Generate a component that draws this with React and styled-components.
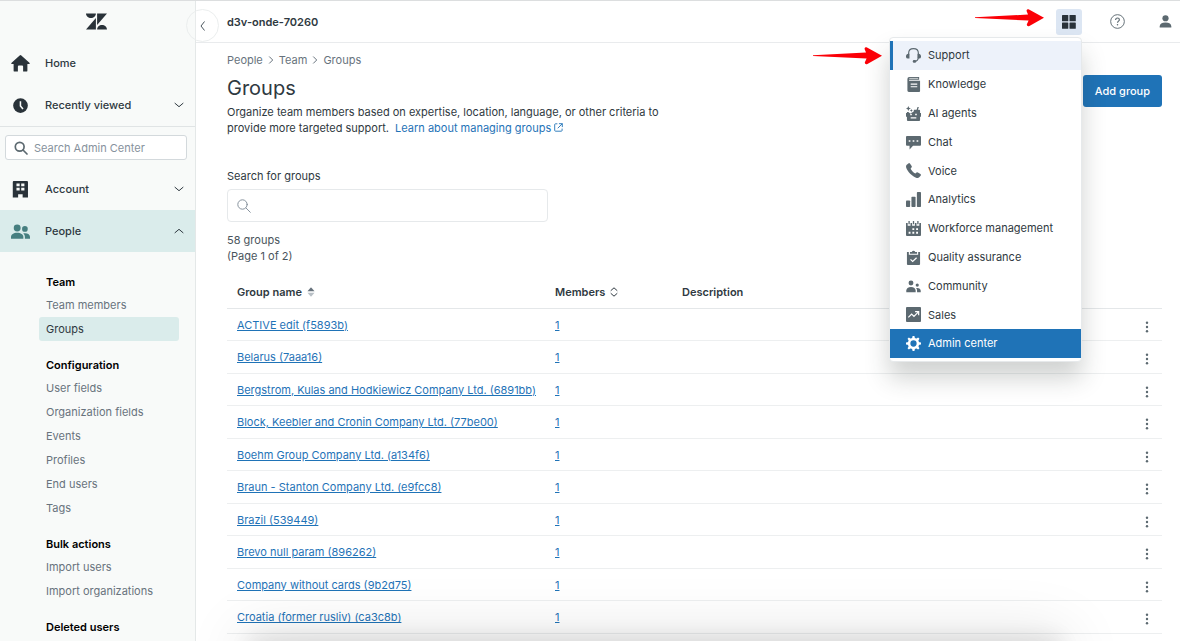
import React from 'react'
import styled, { createGlobalStyle } from 'styled-components'

const GlobalStyle = createGlobalStyle`
*{
    box-sizing:border-box;
}

body{
    margin:0;
    overflow:hidden;
    background-color:white;
    color:#2f3941;
    font-family:Inter, "Liberation Sans", sans-serif;
    font-size:11px;
    line-height:16px;
}

button, input{
    font:inherit;
    color:inherit;
}

h1, h2, p, ul, ol{
    margin:0;
    padding:0;
    font-size:inherit;
    list-style:none;
}

a{
    color:inherit;
    text-decoration:none;
}

svg{
    display:block;
    flex:none;
}
`

const Page = styled.div`
display:flex;
height:100vh;
border-top:1px solid #dcdedf;
overflow:hidden;
`

const Sidebar = styled.aside`
position:relative;
flex:none;
width:196px;
border-right:1px solid #e4e8e8;
background-color:#f8faf9;
`

const LogoLink = styled.a`
display:flex;
justify-content:center;
padding:12px 3px 12px 0;
color:#293239;
`

const NavButton = styled.button`
display:flex;
align-items:center;
width:100%;
height:42px;
padding:0 11px;
border:0;
background-color:${props => props.$active ? '#daeceb' : 'transparent'};
font-weight:500;
text-align:left;

svg:first-child{
    margin-right:15px;
    color:${props => props.$active ? '#467f80' : '#293239'};
}

span{
    flex:1;
}
`

const NavDivider = styled.hr`
margin:0;
border:0;
border-top:1px solid #e0e4e5;
`

const SidebarSearch = styled.label`
display:flex;
align-items:center;
gap:6px;
height:25px;
margin:8px 8px 8px 5px;
padding:0 8px;
border:1px solid #d3d9dc;
border-radius:3px;
background-color:white;
color:#5c6970;

input{
    flex:1;
    min-width:0;
    padding:0;
    border:0;
    outline:0;
    background:none;
}

input::placeholder{
    color:#87929d;
    opacity:1;
}
`

const SubNav = styled.nav`
padding:19px 16px 0 39px;
`

const SubNavGroup = styled.section`
margin-bottom:13px;
`

const SubNavTitle = styled.h2`
padding-left:7px;
color:#000;
font-weight:600;
line-height:22px;
`

const SubNavLink = styled.a`
display:block;
padding-left:7px;
border-radius:3px;
line-height:24px;
color:${props => props.$active ? '#2f3941' : '#68737d'};
background-color:${props => props.$active ? '#daeceb' : 'transparent'};
`

const CollapseButton = styled.button`
position:absolute;
top:8px;
right:-24px;
z-index:1;
display:flex;
align-items:center;
justify-content:center;
width:33px;
height:33px;
padding:0;
border:1px solid #ebeeee;
border-radius:50%;
background:linear-gradient(90deg, #f8faf9 0 8px, #e8ebeb 8px 9px, white 9px);
color:#4a555d;
`

const Content = styled.div`
flex:1;
min-width:0;
display:flex;
flex-direction:column;
`

const TopBar = styled.header`
display:flex;
align-items:center;
gap:22px;
flex:none;
height:42px;
padding:0 2px 0 31px;
border-bottom:1px solid #e9ebed;

strong{
    flex:1;
    font-weight:600;
}
`

const BarButton = styled.button`
display:flex;
align-items:center;
justify-content:center;
width:26px;
height:26px;
padding:0;
border:0;
border-radius:3px;
background-color:${props => props.$open ? '#dce6f3' : 'transparent'};
color:${props => props.$open ? '#293239' : '#5c6970'};
`

const Tray = styled.div`
position:relative;
`

const TrayMenu = styled.ul`
position:absolute;
top:28px;
right:0;
z-index:2;
width:193px;
padding:3px 0;
border:1px solid #e6e9eb;
border-radius:4px;
background-color:white;
box-shadow:0 16px 24px 0 rgba(40, 50, 45, 0.22);
`

const TrayItem = styled.li`
height:29px;

&:nth-child(5n){
    height:28px;
}
`

const TrayLink = styled.a`
display:flex;
align-items:center;
gap:7px;
height:100%;
padding-left:16px;
background-color:${props => props.$current ? '#1f73b7' : props.$focused ? '#edf2fa' : 'transparent'};
box-shadow:${props => props.$focused ? 'inset 3px 0 #1f73b7' : 'none'};
color:${props => props.$current ? 'white' : '#2f3941'};

svg{
    color:${props => props.$current ? 'white' : '#5c6970'};
}
`

const Arrow = styled.svg`
position:absolute;
top:${props => props.$top};
right:${props => props.$right};
z-index:3;
pointer-events:none;
`

const Main = styled.main`
flex:1;
padding:9px 18px 0 31px;
`

const Breadcrumb = styled.ol`
display:flex;
align-items:center;
color:#68737d;

li{
    display:flex;
    align-items:center;
}

svg{
    margin:0 5px;
}
`

const PageHead = styled.div`
display:flex;
align-items:flex-start;
justify-content:space-between;
margin-top:7px;

h1{
    font-size:20px;
    font-weight:400;
    line-height:26px;
}

p{
    max-width:440px;
    margin-top:3px;
}
`

const HelpLink = styled.a`
margin-left:3px;
color:#1f73b7;

svg{
    display:inline;
    margin-left:3px;
}
`

const PrimaryButton = styled.button`
height:32px;
padding:0 12px;
border:0;
border-radius:3px;
background-color:#1f73b7;
color:white;
font-weight:500;
white-space:nowrap;
`

const SearchField = styled.div`
margin-top:32px;

label{
    display:block;
}
`

const SearchBox = styled.div`
display:flex;
align-items:center;
gap:8px;
width:321px;
max-width:100%;
height:33px;
margin-top:5px;
padding:0 9px;
border:1px solid #e6e9eb;
border-radius:4px;
color:#87929d;

input{
    flex:1;
    border:0;
    outline:0;
    background:none;
}
`

const Count = styled.p`
&&{
    margin-top:10px;
}
color:#49545c;
`

const GroupTable = styled.table`
width:100%;
margin-top:13px;
border-collapse:separate;
border-spacing:0;
table-layout:fixed;

th, td{
    height:32px;
    padding:0 10px;
    border-bottom:1px solid #edeff0;
    text-align:left;
    white-space:nowrap;
}

th{
    padding-bottom:2px;
    border-bottom-color:#e4e7e9;
    font-weight:600;
}

th:nth-child(1){
    width:318px;
}

th:nth-child(2){
    width:127px;
}

th:nth-child(4){
    width:40px;
}

tbody tr:nth-child(even) td{
    height:33px;
}

td:last-child{
    padding:0 5px;
}

td a{
    color:#1f73b7;
    text-decoration:underline;
}
`

const SortButton = styled.button`
display:flex;
align-items:center;
gap:5px;
padding:0;
border:0;
background:none;
`

const RowMenuButton = styled.button`
display:flex;
align-items:center;
justify-content:center;
width:20px;
height:20px;
margin:4px 0 0 auto;
padding:0;
border:0;
background:none;
color:#5c6970;
`

const FoldShadow = styled.div`
position:fixed;
top:100%;
left:252px;
right:122px;
height:40px;
box-shadow:0 0 24px 4px rgba(0, 0, 0, 0.1), 0 0 60px 10px rgba(0, 0, 0, 0.1);
pointer-events:none;
`

const stroke = { fill: 'none', stroke: 'currentColor', strokeLinecap: 'round', strokeLinejoin: 'round' }

function Icon({ size = 15, children }) {
  return (
    <svg width={size} height={size} viewBox='0 0 16 16' fill='currentColor' aria-hidden='true'>
      {children}
    </svg>
  )
}

function Chevron({ up }) {
  return (
    <svg width='10' height='6' viewBox='0 0 10 6' {...stroke} aria-hidden='true'>
      <path d={up ? 'M1 4.7l4-3.4 4 3.4' : 'M1 1.3l4 3.4 4-3.4'} />
    </svg>
  )
}

const PeopleShape = () => (
  <>
    <circle cx='5.2' cy='5' r='2.9' />
    <path d='M0 14v-1.4C0 10.500 2.200 9 5.200 9s5.200 1.500 5.200 3.600V14z' />
    <circle cx='11.700' cy='5.800' r='2.400' />
    <path d='M11.700 14H16v-1.300c0-2-1.600-3.300-4.200-3.300-.6 0-1.100.1-1.500.2 1 .8 1.400 1.800 1.400 3z' />
  </>
)

const apps = [
  { name: 'Support', focused: true, icon: <>
    <path d='M2.800 7V5.700C2.800 2.700 5 .7 8 .7s5.200 2 5.200 5v3.600c0 3-1.500 4.800-4 5' fill='none' stroke='currentColor' strokeWidth='1.200' />
    <path d='M3.700 6v5.200H2.500A2.300 2.300 0 010 8.700C0 7.200 1.100 6.200 2.500 6zM12.300 6v5.200h1.200A2.300 2.300 0 0016 8.700c0-1.500-1.100-2.500-2.500-2.700z' />
    <rect x='7.200' y='12.900' width='3.600' height='2.800' rx='1.400' />
  </> },
  { name: 'Knowledge', icon: <>
    <path fillRule='evenodd' d='M3.500 0H14v3H3.500a.6.6 0 000 1H15v11a1 1 0 01-1 1H3a1.500 1.500 0 01-1.500-1.500V2a2 2 0 012-2zM5 7v1.200h7V7zm0 2.800V11h7V9.800z' />
    <path d='M3.500 1.500H13' stroke='white' strokeWidth='.7' />
  </> },
  { name: 'AI agents', icon: <>
    <path d='M2.500 0l.8 1.900 1.900.8-1.900.8-.8 1.900-.8-1.900L0 2.700l1.700-.8zM5.700 3.200l.5 1.100 1.100.5-1.100.5-.5 1.100-.5-1.100-1.100-.5 1.100-.5z' />
    <path fillRule='evenodd' d='M8.500 4h2.800l1-3h1.400l-1 3H14a1 1 0 011 1v2.500h1v4h-1V15a1 1 0 01-1 1H2a1 1 0 01-1-1v-3.500H0v-4h1V6.300l1.500.2 2 1.500L8 6zM4.500 8.300v1.600h1.700V8.300zm5.300 0v1.600h1.700V8.300zM5 12v1.300h6V12z' />
  </> },
  { name: 'Chat', icon: <path fillRule='evenodd' d='M1 1h14a1 1 0 011 1v8.500a1 1 0 01-1 1H7.500L3.800 15.500v-4H1a1 1 0 01-1-1V2a1 1 0 011-1zm1.900 4.500v1.800h1.800V5.500zm4.200 0v1.800h1.800V5.500zm4.200 0v1.800h1.800V5.500z' /> },
  { name: 'Voice', icon: <path d='M.8 1.900L2.500.4a1.200 1.200 0 011.700.2l1.800 2.700a1.200 1.200 0 01-.2 1.500L4.900 6c.9 1.900 3.100 4.100 5.100 5.100l1.200-.9a1.200 1.200 0 011.500-.2l2.700 1.800a1.200 1.200 0 01.2 1.700l-1.500 1.700c-.7.7-1.700 1-2.700.7C6.700 14.600 1.400 9.300.1 4.600c-.2-1 0-2 .7-2.700z' /> },
  { name: 'Analytics', icon: <>
    <rect x='0' y='9' width='4.400' height='7' rx='.8' />
    <rect x='5.800' y='5' width='4.400' height='11' rx='.8' />
    <rect x='11.600' y='0' width='4.400' height='16' rx='.8' />
  </> },
  { name: 'Workforce management', icon: <>
    <path fillRule='evenodd' d='M0 2h1.800v3h3V2h1.700v3h3V2h1.700v3h3V2H16v13a1 1 0 01-1 1H1a1 1 0 01-1-1zM6.800 7.700v2h2v-2zm4 0v2h2v-2zm-8 3.800v2h2v-2zm4 0v2h2v-2zm4 0v2h2v-2z' />
    <path d='M3.300 0v3.500M8 0v3.500M12.700 0v3.500' stroke='currentColor' strokeWidth='1.400' />
  </> },
  { name: 'Quality assurance', icon: <>
    <path d='M1 2h2v3h10V2h2v13a1 1 0 01-1 1H2a1 1 0 01-1-1z' />
    <path d='M4.200 4V2h2a1.900 1.900 0 013.600 0h2v2z' />
    <path d='M4.800 10l2.300 2.200 4.200-4' fill='none' stroke='white' strokeWidth='1.300' />
  </> },
  { name: 'Community', icon: <>
    <circle cx='5.300' cy='4.300' r='2.600' />
    <path d='M.3 14v-1.800c0-2 2-3.700 5-3.700s5 1.700 5 3.700V14z' />
    <circle cx='12' cy='6.500' r='1.700' />
    <path d='M11.800 14h3.900v-1.500c0-1.800-1.500-3-3.700-3-.5 0-.9.100-1.300.2.800.8 1.100 1.700 1.100 2.700z' />
  </> },
  { name: 'Sales', icon: <>
    <rect width='16' height='16' rx='1' />
    <path d='M2.500 11l3.500-3.500 2.500 2.500 4.500-4.500M9.700 5h3.800v3.800' fill='none' stroke='white' strokeWidth='1.300' />
  </> },
  { name: 'Admin center', current: true, icon: <>
    <circle cx='8' cy='8' r='4.700' fill='none' stroke='currentColor' strokeWidth='2.700' />
    {[0, 45, 90, 135, 180, 225, 270, 315].map(angle => (
      <path key={angle} d='M6.400 3L7 0h2l.6 3z' transform={`rotate(${angle} 8 8)`} />
    ))}
  </> },
]

const subNav = [
  { title: 'Team', links: ['Team members', 'Groups'] },
  { title: 'Configuration', links: ['User fields', 'Organization fields', 'Events', 'Profiles', 'End users', 'Tags'] },
  { title: 'Bulk actions', links: ['Import users', 'Import organizations'] },
  { title: 'Deleted users', links: [] },
]

const groups = [
  'ACTIVE edit (f5893b)',
  'Belarus (7aaa16)',
  'Bergstrom, Kulas and Hodkiewicz Company Ltd. (6891bb)',
  'Block, Keebler and Cronin Company Ltd. (77be00)',
  'Boehm Group Company Ltd. (a134f6)',
  'Braun - Stanton Company Ltd. (e9fcc8)',
  'Brazil (539449)',
  'Brevo null param (896262)',
  'Company without cards (9b2d75)',
  'Croatia (former rusliv) (ca3c8b)',
]

function RedArrow({ top, right }) {
  return (
    <Arrow $top={top} $right={right} width='69' height='18' viewBox='0 0 69 18' aria-hidden='true'>
      <path d='M0 8.200L53 5.600l-1.200-3C51 1 52.600-.3 54 .6L69 8.800 54.400 17c-1.600.8-3.200-.5-2.400-2L53.600 11.500 0 9z' fill='#fb0007' />
    </Arrow>
  )
}

function SideNav() {
  return (
    <Sidebar>
      <LogoLink href='#' aria-label='Zendesk'>
        <svg width='21' height='17' viewBox='0 0 21 17' fill='currentColor' aria-hidden='true'>
          <path d='M0 .5h9.900c0 2.700-2.200 4.500-4.900 4.500S0 3.200 0 .5zM9.900 5v11.500H0zM11.100.5H21L11.100 12zM11.100 16.500c0-2.700 2.200-4.600 4.900-4.600s5 1.900 5 4.600z' />
        </svg>
      </LogoLink>
      <NavButton>
        <Icon size={19}><path d='M7.300 1.200a1 1 0 011.400 0l6.800 6.100c.5.500.3 1.100-.4 1.100h-1.300V14c0 .5-.3.800-.8.800h-2.800V10.500c0-.5-.3-.8-.8-.8H6.600c-.5 0-.8.300-.8.800v4.300H3c-.5 0-.8-.3-.8-.8V8.400H.9c-.7 0-.9-.6-.4-1.100z' /></Icon>
        <span>Home</span>
      </NavButton>
      <NavButton>
        <Icon size={19}><path fillRule='evenodd' d='M8 1.900a6.200 6.200 0 100 12.400A6.200 6.200 0 008 1.900zM7.300 4.500h1.300v3.700l2 2.300-1 .9-2.300-2.700z' /></Icon>
        <span>Recently viewed</span>
        <Chevron />
      </NavButton>
      <NavDivider />
      <SidebarSearch>
        <svg width='14' height='14' viewBox='0 0 14 14' {...stroke} strokeWidth='1.700' aria-hidden='true'>
          <circle cx='5.700' cy='5.700' r='4.400' /><path d='M9 9l4 4' />
        </svg>
        <input type='search' placeholder='Search Admin Center' aria-label='Search Admin Center' />
      </SidebarSearch>
      <NavButton>
        <Icon size={19}><path fillRule='evenodd' d='M2.500.8h10.800c.6 0 1 .4 1 1v13H9.800v-2.700H6v2.700H1.500v-13c0-.6.400-1 1-1zM4.600 3v2.300h2.700V3zm4 0v2.300h2.700V3zm-4 3.600v2.300h2.700V6.600zm4 0v2.300h2.700V6.600z' /></Icon>
        <span>Account</span>
        <Chevron />
      </NavButton>
      <NavButton $active aria-expanded='true'>
        <Icon size={19}><PeopleShape /></Icon>
        <span>People</span>
        <Chevron up />
      </NavButton>
      <SubNav>
        {subNav.map(group => (
          <SubNavGroup key={group.title}>
            <SubNavTitle>{group.title}</SubNavTitle>
            {group.links.map(link => (
              <SubNavLink key={link} href='#' $active={link === 'Groups'}>{link}</SubNavLink>
            ))}
          </SubNavGroup>
        ))}
      </SubNav>
      <CollapseButton aria-label='Collapse navigation'>
        <svg width='5' height='10' viewBox='0 0 5 10' {...stroke} aria-hidden='true'><path d='M4.300.8L1 5l3.300 4.200' /></svg>
      </CollapseButton>
    </Sidebar>
  )
}

function Header() {
  return (
    <TopBar>
      <strong>d3v-onde-70260</strong>
      <Tray>
        <BarButton $open aria-label='Zendesk products' aria-expanded='true'>
          <svg width='14' height='14' viewBox='0 0 14 14' fill='currentColor' aria-hidden='true'>
            <rect x='0' y='0' width='6.300' height='6.300' rx='.6' />
            <rect x='7.500' y='0' width='6.300' height='6.300' rx='.6' />
            <rect x='0' y='7.500' width='6.300' height='6.300' rx='.6' />
            <rect x='7.500' y='7.500' width='6.300' height='6.300' rx='.6' />
          </svg>
        </BarButton>
        <TrayMenu>
          {apps.map(app => (
            <TrayItem key={app.name}>
              <TrayLink href='#' $current={app.current} $focused={app.focused}>
                <Icon>{app.icon}</Icon>
                {app.name}
              </TrayLink>
            </TrayItem>
          ))}
        </TrayMenu>
        <RedArrow top='0px' right='38px' />
        <RedArrow top='38px' right='200px' />
      </Tray>
      <BarButton aria-label='Help'>
        <Icon>
          <circle cx='8' cy='8' r='7.300' fill='none' stroke='currentColor' />
          <path d='M6 6.300C6 5 6.800 4.200 8 4.200s2 .8 2 1.900C10 7.500 8 7.700 8 9.300' fill='none' stroke='currentColor' strokeWidth='1.200' />
          <circle cx='8' cy='11.500' r='.8' />
        </Icon>
      </BarButton>
      <BarButton aria-label='Profile'>
        <Icon>
          <circle cx='8' cy='4.500' r='3.300' />
          <path d='M1.800 14.500v-1.300C1.800 10.500 4 9 8 9s6.200 1.500 6.200 4.200v1.300z' />
        </Icon>
      </BarButton>
    </TopBar>
  )
}

function Crumb({ children, last }) {
  return (
    <li>
      {last ? <span aria-current='page'>{children}</span> : <a href='#'>{children}</a>}
      {!last && <svg width='6' height='8' viewBox='0 0 6 8' {...stroke} aria-hidden='true'><path d='M1.500.8L4.700 4 1.500 7.200' /></svg>}
    </li>
  )
}

function App() {
  return (
    <>
      <GlobalStyle />
      <Page>
        <SideNav />
        <Content>
          <Header />
          <Main>
            <Breadcrumb>
              <Crumb>People</Crumb>
              <Crumb>Team</Crumb>
              <Crumb last>Groups</Crumb>
            </Breadcrumb>
            <PageHead>
              <div>
                <h1>Groups</h1>
                <p>
                  Organize team members based on expertise, location, language, or other criteria to provide more targeted support.{' '}
                  <HelpLink href='#'>
                    Learn about managing groups
                    <svg width='9' height='9' viewBox='0 0 9 9' {...stroke} strokeWidth='.9' aria-hidden='true'>
                      <path d='M3 .8H1.500a.8.8 0 00-.8.800v5.800c0 .5.300.8.800.8h5.800c.5 0 .8-.3.800-.8V6M5.300.7h3v3M8.100.9L4 5' />
                    </svg>
                  </HelpLink>
                </p>
              </div>
              <PrimaryButton>Add group</PrimaryButton>
            </PageHead>
            <SearchField>
              <label htmlFor='group-search'>Search for groups</label>
              <SearchBox>
                <svg width='14' height='14' viewBox='0 0 14 14' {...stroke} aria-hidden='true'>
                  <circle cx='5.500' cy='5.500' r='4.700' /><path d='M9 9l4.300 4.300' />
                </svg>
                <input id='group-search' type='search' />
              </SearchBox>
            </SearchField>
            <Count>58 groups<br />(Page 1 of 2)</Count>
            <GroupTable>
              <thead>
                <tr>
                  <th>
                    <SortButton>
                      Group name
                      <svg width='8' height='10' viewBox='0 0 8 10' aria-hidden='true'>
                        <path d='M.5 4.200h7L4.500.8a.7.7 0 00-1 0z' fill='#68737d' />
                        <path d='M.5 5.800h7l-3 3.400a.7.7 0 01-1 0z' fill='#b9c0c6' />
                      </svg>
                    </SortButton>
                  </th>
                  <th>
                    <SortButton>
                      Members
                      <svg width='8' height='10' viewBox='0 0 8 10' {...stroke} aria-hidden='true'>
                        <path d='M1 3.500L4 .8l3 2.700M1 6.500l3 2.700 3-2.700' />
                      </svg>
                    </SortButton>
                  </th>
                  <th>Description</th>
                  <th aria-label='Actions'></th>
                </tr>
              </thead>
              <tbody>
                {groups.map(name => (
                  <tr key={name}>
                    <td><a href='#'>{name}</a></td>
                    <td><a href='#'>1</a></td>
                    <td></td>
                    <td>
                      <RowMenuButton aria-label={`Actions for ${name}`}>
                        <svg width='4' height='12' viewBox='0 0 4 12' fill='currentColor' aria-hidden='true'>
                          <circle cx='2' cy='1.700' r='1.200' /><circle cx='2' cy='6' r='1.200' /><circle cx='2' cy='10.300' r='1.200' />
                        </svg>
                      </RowMenuButton>
                    </td>
                  </tr>
                ))}
              </tbody>
            </GroupTable>
          </Main>
        </Content>
      </Page>
      <FoldShadow />
    </>
  )
}

export default App
